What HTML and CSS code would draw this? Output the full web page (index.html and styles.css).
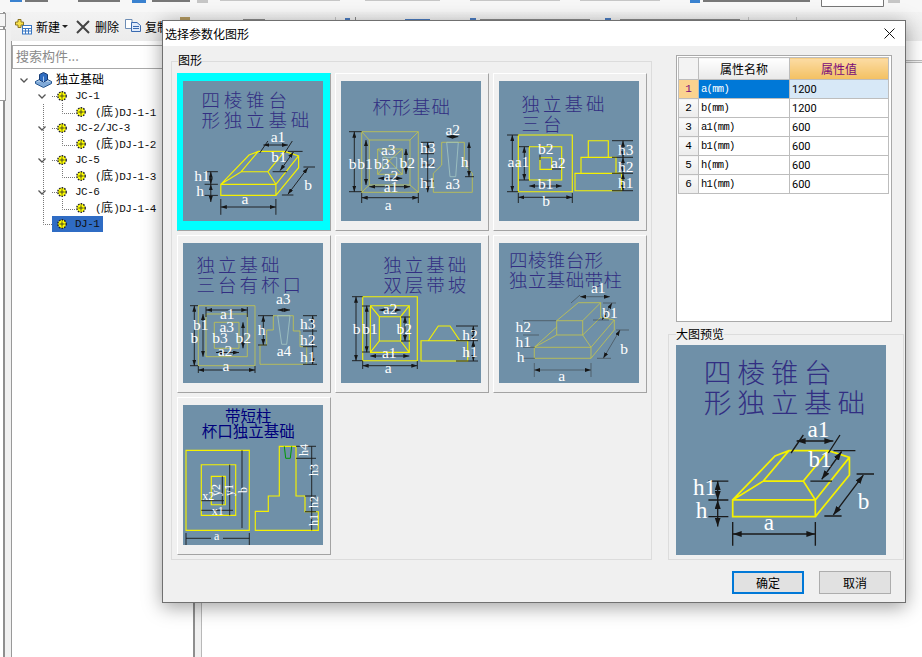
FILE: index.html
```html
<!DOCTYPE html>
<html lang="zh-CN">
<head>
<meta charset="utf-8">
<title>选择参数化图形</title>
<link rel="stylesheet" href="styles.css">
</head>
<body>
<svg class="sprite" width="0" height="0" aria-hidden="true">
  <defs>
    <marker id="ar" viewBox="0 0 6 4" markerWidth="6" markerHeight="4" refX="6" refY="2" orient="auto-start-reverse" markerUnits="userSpaceOnUse">
      <path d="M0 0L6 2L0 4Z" fill="#161616"/>
    </marker>
    <symbol id="gear" viewBox="0 0 10 10">
      <circle cx="5" cy="5" r="4.2" fill="#ffff00" stroke="#1c1c30" stroke-width="1.4" stroke-dasharray="1.6 1.1"/>
      <path d="M5 2.4V7.6M2.4 5H7.6" stroke="#3a3a20" stroke-width=".9"/>
    </symbol>

    <symbol id="fig1" viewBox="0 0 140 140">
      <rect class="bg" width="140" height="140"/>
      <text class="tt wide" x="18.500" y="25.500">四棱锥台</text>
      <text class="tt wide" x="18.500" y="45.500">形独立基础</text>
      <path class="y" d="M37.8 103.3H92.9V114.4H37.8ZM37.8 103.3L66 74L75.3 70.4H101.6L115.6 74.9V86.7L92.9 114.4M92.9 103.3L115.6 74.9M37.8 103.3L58.2 90.7H84.9L92.9 103.3M58.2 90.7L75.3 70.4M84.9 90.7L101.6 70.4"/>
      <path class="k" d="M37.8 118V133.8M92.9 118V133.8M76.7 72L84.9 60M101.6 72L109.3 60M105 70.4H119.6M89.6 90.7H104M120.4 86H132M98.9 114H110.4M21.6 90.7H34.9M21.6 103.3H34.9M21.6 114.4H34.9"/>
      <g class="k" marker-start="url(#ar)" marker-end="url(#ar)">
        <line x1="37.8" y1="126" x2="92.9" y2="126"/>
        <line x1="80.4" y1="64" x2="104.9" y2="64"/>
        <line x1="110.4" y1="71" x2="97.1" y2="89.6"/>
        <line x1="124.9" y1="86.7" x2="104.9" y2="113.3"/>
        <line x1="27.8" y1="90.7" x2="27.8" y2="103.3"/>
        <line x1="27.8" y1="103.3" x2="27.8" y2="121"/>
      </g>
      <text class="t" x="62" y="123">a</text><text class="t" x="95" y="61">a1</text>
      <text class="t" x="96" y="81">b1</text><text class="t" x="125" y="109">b</text>
      <text class="t" x="19" y="100">h1</text><text class="t" x="17" y="115">h</text>
    </symbol>

    <symbol id="fig2" viewBox="0 0 140 140">
      <rect class="bg" width="140" height="140"/>
      <text class="tt" x="31.5" y="33" letter-spacing="1.2">杯形基础</text>
      <path class="o" d="M20.7 50.7H77.3V111.3H20.7ZM28.3 59H69V104H28.3ZM36.7 68H61.3V93.3H36.7ZM20.7 50.7L28.3 59M77.3 50.7L69 59M20.7 111.3L28.3 104M77.3 111.3L69 104M36.7 93.3L48 80L61.3 68M36.7 68L61.3 93.3M100.7 61.3H123.3V84L131.3 92.3V111.3H92.3V92.3L100.7 84Z"/>
      <path class="l" d="M41.7 76.3H55.7V87.3H41.7ZM105.7 61.3H117.3L114.7 95.7H109Z"/>
      <path class="k" d="M8 50.7H20.7M8 110.7H20.7M20.7 112V122M77.3 112V122M80 61.3H93M80 72.7H93M80 84H93M80 100H93M124 95.7H133"/>
      <g class="k" marker-start="url(#ar)" marker-end="url(#ar)">
        <line x1="13.3" y1="50.7" x2="13.3" y2="110.7"/><line x1="25" y1="59" x2="25" y2="104"/>
        <line x1="65" y1="68" x2="65" y2="93"/><line x1="37.3" y1="97.3" x2="61.3" y2="97.3"/>
        <line x1="28.3" y1="105.7" x2="69" y2="105.7"/><line x1="20.7" y1="116.7" x2="77.3" y2="116.7"/>
        <line x1="105.7" y1="55.7" x2="117.3" y2="55.7"/><line x1="128" y1="61.3" x2="128" y2="95.7"/>
        <line x1="86.7" y1="61.3" x2="86.7" y2="111.3"/>
      </g>
      <text class="t" x="11.7" y="88">b</text><text class="t" x="24" y="88">b1</text><text class="t" x="40.7" y="88">b3</text>
      <text class="t" x="66.3" y="87">b2</text><text class="t" x="47.3" y="74">a3</text><text class="t" x="50" y="100">a2</text>
      <text class="t" x="50" y="111">a1</text><text class="t" x="47.3" y="129">a</text><text class="t" x="111.7" y="54">a2</text>
      <text class="t" x="111.7" y="108">a3</text><text class="t" x="86.7" y="72">h3</text><text class="t" x="86.7" y="87">h2</text>
      <text class="t" x="86.7" y="107">h1</text><text class="t" x="123.5" y="86">h</text>
    </symbol>

    <symbol id="fig3" viewBox="0 0 140 140">
      <rect class="bg" width="140" height="140"/>
      <text class="tt" x="22.5" y="30" letter-spacing="3">独立基础</text>
      <text class="tt" x="22.5" y="50" letter-spacing="3">三台</text>
      <path class="y" d="M19.3 54H73.3V110.7H19.3ZM30.3 65.7H62.7V99H30.3ZM41 76.7H52.7V88.3H41ZM89.3 59.7H109.3V76.3H89.3ZM82 76.3H117V92.3H82ZM76 92.3H122.7V109.7H76Z"/>
      <path class="k" d="M8 54H19.3M8 110.7H19.3M20 65.7H30M20 99H30M19.3 112V122M73.3 112V122M113 59.7H134M113 76.3H134M113 92.3H134M113 109.7H134M41 79V74M53 88H62"/>
      <g class="k" marker-start="url(#ar)" marker-end="url(#ar)">
        <line x1="13.3" y1="54" x2="13.3" y2="110.7"/><line x1="25.3" y1="65.7" x2="25.3" y2="99"/>
        <line x1="30.3" y1="105" x2="62.7" y2="105"/><line x1="19.3" y1="116.3" x2="73.3" y2="116.3"/>
        <line x1="124" y1="59.7" x2="124" y2="76.3"/><line x1="124" y1="76.3" x2="124" y2="92.3"/><line x1="124" y1="92.3" x2="124" y2="109.7"/>
      </g>
      <text class="t" x="12" y="86">a</text><text class="t" x="23" y="86">a1</text><text class="t" x="46.7" y="73">b2</text>
      <text class="t" x="59.3" y="87">a2</text><text class="t" x="46.7" y="108">b1</text><text class="t" x="47" y="125">b</text>
      <text class="t" x="126.7" y="74">h3</text><text class="t" x="126.7" y="90.7">h2</text><text class="t" x="126.7" y="107">h1</text>
    </symbol>

    <symbol id="fig4" viewBox="0 0 140 140">
      <rect class="bg" width="140" height="140"/>
      <text class="tt" x="13.5" y="28.7" letter-spacing="3">独立基础</text>
      <text class="tt" x="13.5" y="49" letter-spacing="3">三台有杯口</text>
      <path class="o" d="M15.3 62.7H72V122.7H15.3ZM23 71H64.3V113.7H23ZM31.3 79.3H56V105.3H31.3ZM90.3 72.7H110.3V88H117V103.7H123.7V121.3H77V102H83.7V87H90.3Z"/>
      <path class="l" d="M94.7 72.7H107L103.7 101.3H98.7Z"/>
      <path class="k" d="M7 62.7H15M7 122.7H15M75 72.7H90M75 102H84M120 72.7H134M120 88H134M120 103.7H134M120 121.3H134M15.3 123V130M72 123V130M23 64V74M64.3 64V74"/>
      <g class="k" marker-start="url(#ar)" marker-end="url(#ar)">
        <line x1="11.3" y1="62.7" x2="11.3" y2="122.7"/><line x1="15.3" y1="127" x2="72" y2="127"/>
        <line x1="23" y1="67" x2="64.3" y2="67"/><line x1="20" y1="71" x2="20" y2="113.7"/>
        <line x1="33" y1="109.5" x2="56" y2="109.5"/><line x1="60" y1="79.3" x2="60" y2="105.3"/>
        <line x1="94.7" y1="67" x2="107" y2="67"/><line x1="80.3" y1="72.7" x2="80.3" y2="102"/>
        <line x1="129.7" y1="72.7" x2="129.7" y2="121.3"/>
      </g>
      <text class="t" x="44.3" y="76">a1</text><text class="t" x="43.7" y="88.7">a3</text><text class="t" x="17.7" y="87">b1</text>
      <text class="t" x="11.3" y="99.7">b</text><text class="t" x="37" y="99.7">b3</text><text class="t" x="60.3" y="99.7">b2</text>
      <text class="t" x="42" y="112.7">a2</text><text class="t" x="43" y="128">a</text><text class="t" x="100.3" y="61">a3</text>
      <text class="t" x="101" y="113">a4</text><text class="t" x="78.7" y="92">h</text><text class="t" x="124.7" y="86">h3</text>
      <text class="t" x="124.7" y="102">h2</text><text class="t" x="124.7" y="118.7">h1</text>
    </symbol>

    <symbol id="fig5" viewBox="0 0 140 140">
      <rect class="bg" width="140" height="140"/>
      <text class="tt" x="42.3" y="28.7" letter-spacing="3">独立基础</text>
      <text class="tt" x="42.3" y="49" letter-spacing="3">双层带坡</text>
      <path class="y" d="M21.7 53.7H76.3V117.7H21.7ZM29.3 62.7H68.3V109.3H29.3ZM38.3 73.7H59.7V98H38.3ZM29.3 62.7L38.3 73.7M68.3 62.7L59.7 73.7M29.3 109.3L38.3 98M68.3 109.3L59.7 98M80 97.7H126.7V118H80ZM87.3 97.7L97.3 83H109L119 97.7"/>
      <path class="k" d="M11 53.7H21.7M11 117.7H21.7M21 63H29M21 109H29M60 74H69M60 98H69M21.7 118V126M76.3 118V126M115 83H137M115 97.7H137M115 118H137"/>
      <g class="k" marker-start="url(#ar)" marker-end="url(#ar)">
        <line x1="15" y1="53.7" x2="15" y2="117.7"/><line x1="25.7" y1="62.7" x2="25.7" y2="109.3"/>
        <line x1="64" y1="73.7" x2="64" y2="98"/><line x1="29.3" y1="113" x2="68.3" y2="113"/>
        <line x1="21.7" y1="122.7" x2="76.3" y2="122.7"/><line x1="38.3" y1="67" x2="59.7" y2="67"/>
        <line x1="132.3" y1="83" x2="132.3" y2="97.7"/><line x1="132.3" y1="97.7" x2="132.3" y2="118"/>
      </g>
      <text class="t" x="49" y="71">a2</text><text class="t" x="15.7" y="91">b</text><text class="t" x="29" y="91">b1</text>
      <text class="t" x="63.3" y="91">b2</text><text class="t" x="48.3" y="115">a1</text><text class="t" x="47.3" y="129.7">a</text>
      <text class="t" x="129" y="97">h2</text><text class="t" x="129" y="114.3">h1</text>
    </symbol>

    <symbol id="fig6" viewBox="0 0 140 140">
      <rect class="bg" width="140" height="140"/>
      <text class="tt" x="10" y="23.7" letter-spacing=".4">四棱锥台形</text>
      <text class="tt" x="10" y="44.3" letter-spacing=".4">独立基础带柱</text>
      <path class="o" d="M35.3 104.3H92V115.3H35.3ZM57.7 77.7H83.7V92H57.7ZM57.7 77.7L79.3 59.7H101.7L83.7 77.7M101.7 59.7V74.3L83.7 92M35.3 104.3L57.7 84M57.7 92L35.3 104.3M83.7 92L92 104.3L115.3 77V87L92 115.3M101.7 74.3L115.3 77"/>
      <path class="k thin" d="M35.3 120V134M92 120V134M72 60L81 52M104 60H117M94 77H110M117 87H130M98 115.3H112M24 77.7H57M24 92H40M24 104.3H36M24 115.3H36"/>
      <g class="k thin" marker-start="url(#ar)" marker-end="url(#ar)">
        <line x1="35.3" y1="127" x2="92" y2="127"/><line x1="81" y1="53.7" x2="111" y2="53.7"/>
        <line x1="113" y1="60" x2="103" y2="77"/><line x1="121" y1="87" x2="104.3" y2="115.3"/>
      </g>
      <text class="t" x="99.3" y="50.3">a1</text><text class="t" x="111" y="75.3">b1</text><text class="t" x="24.3" y="88.7">h2</text>
      <text class="t" x="24.3" y="104">h1</text><text class="t" x="21.7" y="118.7">h</text><text class="t" x="125" y="111">b</text>
      <text class="t" x="62.7" y="138">a</text>
    </symbol>

    <symbol id="fig7" viewBox="0 0 140 140">
      <rect class="bg" width="140" height="140"/>
      <text class="tn" x="42" y="17.3">带短柱</text>
      <text class="tn" x="18.7" y="32.3">杯口独立基础</text>
      <path class="y" d="M3 45.3H66.3V125.3H3ZM18.3 59.7H52.7V110.3H18.3ZM28.3 71.3H42.3V99.7H28.3ZM96.3 41.3H113V91H122V106.7H135.3V125.3H72.3V106.3H85.3V91H96.3Z"/>
      <path class="g" d="M101.3 41.3L102.7 53.3H107.3L108.7 41.3"/>
      <path class="k" d="M3 128V140M66.3 128V140M3 133.3H28M40 133.3H66.3M59 45.3V123M46.7 59.7V110.3M39.3 71.3V99.7M18.3 95.7H41M18.3 105.3H50M128.7 41.3V125.3M113 41.3H133M113 53.3H133M122 91H133M122 106.7H133"/>
      <text class="tb" x="25.3" y="95">x2</text><text class="tb" x="34.7" y="110">x1</text><text class="tb" x="33.7" y="135">a</text>
      <text class="tb" transform="rotate(-90 37 85)" x="37" y="85">y2</text>
      <text class="tb" transform="rotate(-90 50 85)" x="50" y="85">y1</text>
      <text class="tb" transform="rotate(-90 64 85)" x="64" y="85">b</text>
      <text class="tb" transform="rotate(-90 125 45)" x="125" y="45">h4</text>
      <text class="tb" transform="rotate(-90 135 65)" x="135" y="65">h3</text>
      <text class="tb" transform="rotate(-90 135 97)" x="135" y="97">h2</text>
      <text class="tb" transform="rotate(-90 135 115)" x="135" y="115">h1</text>
    </symbol>
  </defs>
</svg>

<div class="app">
  <svg class="topstrip" viewBox="0 0 922 12" aria-hidden="true">
    <path class="strip-a" d="M25 0H48V2H25ZM78 0H120V2H78ZM152 0H190V2H152ZM703 0H810V2H703Z"/>
    <path class="strip-b" d="M10 0H22V2H10ZM132 0H146V3H132ZM690 0H700V3H690Z"/>
    <path class="strip-c" d="M197 0H208V3H197ZM220 0H340V1H220ZM365 0H440V1H365ZM470 0H560V1H470ZM580 0H660V1H580ZM888 0H900V3H888Z"/>
    <path class="strip-box" d="M821.500 0V6.500H883.500V0"/>
  </svg>
  <div class="work">
    <div class="rail">
      <div class="rail-tab"></div>
      <div class="rail-tab tall"></div>
    </div>
    <div class="workspace">
      <div class="toolbar">
        <svg class="tool-icon" viewBox="0 0 17 16" aria-hidden="true">
          <rect x="7.500" y="6.500" width="9" height="8.500" fill="#fff" stroke="#3b78c4"/>
          <path d="M7.500 9.500H16.500M10.500 9.500V15M13.500 9.500V15M7.500 12H16.500" stroke="#3b78c4" fill="none"/>
          <path d="M3 .5H6V3H8.500V6H6V8.500H3V6H.5V3H3Z" fill="#f7e04a" stroke="#8a7420"/>
        </svg>
        <span class="tool-label">新建</span>
        <span class="caret"></span>
        <svg class="tool-icon del" viewBox="0 0 14 14" aria-hidden="true">
          <path d="M1 1L13 13M13 1L1 13" stroke="#444" stroke-width="2" fill="none"/>
        </svg>
        <span class="tool-label">删除</span>
        <svg class="tool-icon copy" viewBox="0 0 16 13" aria-hidden="true">
          <path d="M.5.5H7V9.500H.5Z" fill="#fff" stroke="#6d8db5"/>
          <path d="M6.500 3.500H12L15.500 6.500V12.500H6.500Z" fill="#dfeafa" stroke="#3a6ab0"/>
          <path d="M8 7.500H14M8 9.500H14" stroke="#3a6ab0"/>
        </svg>
        <span class="tool-label">复制</span>
        <svg class="tool-frags" viewBox="0 0 752 29" aria-hidden="true">
          <path class="frag-t" d="M10 5H20V8H10Z"/>
          <path class="frag-k" d="M73 7H95V8H73ZM185 5H186V8H185ZM310 7H420V8H310ZM450 7H570V8H450Z"/>
          <path class="frag-b" d="M175 6H180V8H175ZM235 7H260V8H235ZM300 6H306V8H300ZM435 6H441V8H435Z"/>
          <path class="frag-s" d="M165 5H166V8H165ZM578 5H579V8H578ZM626 5H627V8H626Z"/>
        </svg>
      </div>
      <div class="panes">
        <aside class="panel">
          <div class="search">搜索构件...</div>
          <div class="tree">
            <svg class="tree-lines" viewBox="0 0 181 170" aria-hidden="true">
              <path d="M31.500 35V155.500H40M50.500 34V44.500H63M50.500 66V76.500H63M50.500 98V108.500H63M50.500 130V140.500H63M40 27.500H45M40 59.500H45M40 91.500H45M40 123.500H45" />
            </svg>
            <div class="row root">
              <svg class="chev" viewBox="0 0 8 5" aria-hidden="true"><path d="M.5 .5L4 4L7.500 .5"/></svg>
              <svg class="root-icon" viewBox="0 0 17 16" aria-hidden="true">
                <path d="M.5 9.500L8.500 5.500L16.500 9.500L8.500 14Z" fill="#cfe3f7" stroke="#24558f"/>
                <path d="M.5 9.500V11.500L8.500 15.500L16.500 11.500V9.500" fill="#7fa9d8" stroke="#24558f"/>
                <path d="M4.500 2.500L8.500 .5L12.500 2.500V8L8.500 10L4.500 8Z" fill="#2f6cc0" stroke="#173c75"/>
                <path d="M8.500 4.500V10" stroke="#a9c9ef"/>
              </svg>
              <span class="cn-label">独立基础</span>
            </div>
            <div class="row lvl1"><svg class="chev" viewBox="0 0 8 5" aria-hidden="true"><path d="M.5 .5L4 4L7.500 .5"/></svg><svg class="gear" aria-hidden="true"><use href="#gear"/></svg><span class="code">JC-1</span></div>
            <div class="row lvl2"><svg class="gear" aria-hidden="true"><use href="#gear"/></svg><span class="code">(<span class="cn">底</span>)DJ-1-1</span></div>
            <div class="row lvl1"><svg class="chev" viewBox="0 0 8 5" aria-hidden="true"><path d="M.5 .5L4 4L7.500 .5"/></svg><svg class="gear" aria-hidden="true"><use href="#gear"/></svg><span class="code">JC-2/JC-3</span></div>
            <div class="row lvl2"><svg class="gear" aria-hidden="true"><use href="#gear"/></svg><span class="code">(<span class="cn">底</span>)DJ-1-2</span></div>
            <div class="row lvl1"><svg class="chev" viewBox="0 0 8 5" aria-hidden="true"><path d="M.5 .5L4 4L7.500 .5"/></svg><svg class="gear" aria-hidden="true"><use href="#gear"/></svg><span class="code">JC-5</span></div>
            <div class="row lvl2"><svg class="gear" aria-hidden="true"><use href="#gear"/></svg><span class="code">(<span class="cn">底</span>)DJ-1-3</span></div>
            <div class="row lvl1"><svg class="chev" viewBox="0 0 8 5" aria-hidden="true"><path d="M.5 .5L4 4L7.500 .5"/></svg><svg class="gear" aria-hidden="true"><use href="#gear"/></svg><span class="code">JC-6</span></div>
            <div class="row lvl2"><svg class="gear" aria-hidden="true"><use href="#gear"/></svg><span class="code">(<span class="cn">底</span>)DJ-1-4</span></div>
            <div class="row selected"><svg class="gear" aria-hidden="true"><use href="#gear"/></svg><span class="code">DJ-1</span></div>
          </div>
        </aside>
        <div class="splitter"></div>
        <main class="main"><div class="main-rule"></div></main>
      </div>
    </div>
  </div>
</div>

<section class="dialog">
  <header class="dialog-title">
    <span>选择参数化图形</span>
    <svg class="close" viewBox="0 0 11 11" aria-hidden="true"><path d="M.5 .5L10.500 10.500M10.500 .5L.5 10.500"/></svg>
  </header>
  <div class="content">
    <div class="group shapes">
      <div class="group-label">图形</div>
      <div class="shape-grid">
        <div class="cell active"><svg class="thumb"><use href="#fig1"/></svg></div>
        <div class="cell"><svg class="thumb"><use href="#fig2"/></svg></div>
        <div class="cell"><svg class="thumb"><use href="#fig3"/></svg></div>
        <div class="cell"><svg class="thumb"><use href="#fig4"/></svg></div>
        <div class="cell"><svg class="thumb"><use href="#fig5"/></svg></div>
        <div class="cell"><svg class="thumb"><use href="#fig6"/></svg></div>
        <div class="cell"><svg class="thumb"><use href="#fig7"/></svg></div>
      </div>
    </div>
    <div class="side">
      <div class="table-wrap">
        <table class="props">
          <thead>
            <tr><th class="corner"></th><th class="name-head">属性名称</th><th class="value-head">属性值</th></tr>
          </thead>
          <tbody>
            <tr><th class="idx current">1</th><td class="name picked">a(mm)</td><td class="val picked-val">1200</td></tr>
            <tr><th class="idx">2</th><td class="name">b(mm)</td><td class="val">1200</td></tr>
            <tr><th class="idx">3</th><td class="name">a1(mm)</td><td class="val">600</td></tr>
            <tr><th class="idx">4</th><td class="name">b1(mm)</td><td class="val">600</td></tr>
            <tr><th class="idx">5</th><td class="name">h(mm)</td><td class="val">600</td></tr>
            <tr><th class="idx">6</th><td class="name">h1(mm)</td><td class="val">600</td></tr>
          </tbody>
        </table>
      </div>
      <div class="group preview">
        <div class="group-label">大图预览</div>
        <svg class="large"><use href="#fig1"/></svg>
      </div>
    </div>
  </div>
  <footer class="dialog-foot">
    <button class="btn primary" type="button">确定</button>
    <button class="btn" type="button">取消</button>
  </footer>
</section>
</body>
</html>
```

FILE: styles.css
```css
* { box-sizing: border-box; }
html, body { margin: 0; padding: 0; }
body {
  width: 922px;
  height: 657px;
  overflow: hidden;
  position: relative;
  background: #fff;
  color: #000;
  font: 12px "Noto Sans CJK SC", "Liberation Sans", sans-serif;
}
.sprite { position: absolute; }

/* ---------- application behind the dialog ---------- */
.app { display: flex; flex-direction: column; height: 657px; }
.topstrip { display: block; width: 922px; height: 12px; flex: none; background: #f7f7f7; }
.strip-a { fill: #777; }
.strip-b { fill: #3a82d0; }
.strip-c { fill: #c6c6c6; }
.strip-box { fill: #fff; stroke: #777; }

.work { flex: 1; display: flex; min-height: 0; }
.rail {
  width: 11px;
  flex: none;
  background: linear-gradient(to right, #fff 3px, #8e8e8e 3px, #8e8e8e 5px, #f0f0f0 5px);
  display: flex;
  flex-direction: column;
  padding-top: 1px;
  gap: 2px;
}
.rail-tab { width: 6px; height: 14px; background: #f5f5f5; border: 1px solid #9a9a9a; border-left: 0; }
.rail-tab.tall { height: 72px; background: #fff; }

.workspace { flex: 1; display: flex; flex-direction: column; min-width: 0; }
.toolbar {
  height: 29px;
  flex: none;
  display: flex;
  align-items: center;
  padding-left: 4px;
  background: linear-gradient(#f3f3f3, #ececec);
  overflow: hidden;
  position: relative;
}
.tool-icon { width: 17px; height: 16px; flex: none; }
.tool-icon.del { width: 14px; height: 14px; margin-left: 8px; }
.tool-icon.copy { width: 16px; height: 13px; margin-left: 6px; margin-top: -2px; }
.tool-label { margin-left: 4px; font-size: 12px; line-height: 16px; white-space: nowrap; }
.tool-icon.del + .tool-label { margin-left: 5px; }
.caret {
  width: 0;
  height: 0;
  margin-left: 2px;
  border: 3px solid transparent;
  border-top: 3px solid #222;
  border-bottom: 0;
}
.tool-frags { position: absolute; left: 159px; top: 0; width: 752px; height: 29px; }
.frag-t { fill: #b39a62; }
.frag-k { fill: #8a8a8a; }
.frag-b { fill: #4a7cc0; }
.frag-s { fill: #c4c4c4; }

.panes { flex: 1; display: flex; min-height: 0; }
.panel { width: 182px; flex: none; display: flex; flex-direction: column; border-left: 1px solid #999; background: #fff; margin-left: 0; }
.search {
  height: 24px;
  margin-top: 4px;
  border: 1px solid #a8a8a8;
  padding-left: 3px;
  line-height: 20px;
  font-size: 13px;
  color: #8a8a8a;
  flex: none;
}
.tree { flex: 1; position: relative; padding-top: 3px; }
.tree-lines {
  position: absolute;
  left: 0;
  top: 0;
  width: 181px;
  height: 170px;
  fill: none;
  stroke: #777;
  stroke-dasharray: 1 1;
}
.row { display: flex; align-items: center; height: 16px; position: relative; }
.root { padding-left: 8px; }
.lvl1 { padding-left: 26px; }
.lvl2 { padding-left: 64px; }
.selected { margin-left: 40px; width: 51px; padding-left: 5px; background: #2f6cc4; }
.chev { width: 8px; height: 5px; flex: none; fill: none; stroke: #555; stroke-width: 1.3; }
.root-icon { width: 17px; height: 16px; margin-left: 7px; margin-right: 4px; flex: none; }
.gear { width: 10px; height: 10px; flex: none; }
.lvl1 .gear { margin-left: 11px; }
.lvl1 .code, .selected .code { margin-left: 8px; }
.lvl2 .code { margin-left: 9px; }
.code {
  font-family: "Liberation Mono", "Noto Sans CJK SC", monospace;
  font-size: 11px;
  letter-spacing: -.5px;
  white-space: nowrap;
  color: #111;
}
.cn { font-family: "Noto Sans CJK SC", sans-serif; font-size: 12px; letter-spacing: 0; line-height: 12px; }
.cn-label { font-size: 12px; line-height: 14px; margin-top: -2px; white-space: nowrap; }

.splitter {
  width: 9px;
  flex: none;
  background: #f0f0f0;
  border-left: 2px solid #8e8e8e;
  border-right: 1px solid #b8b8b8;
}
.main { flex: 1; background: #fff; padding-top: 19px; }
.main-rule { height: 3px; border-top: 1px solid #bbb; border-bottom: 1px solid #bbb; background: #f2f2f2; }

/* ---------- dialog ---------- */
.dialog {
  position: absolute;
  left: 162px;
  top: 20px;
  width: 744px;
  height: 583px;
  background: #f0f0f0;
  border: 1px solid #707070;
  box-shadow: 0 4px 18px rgba(0, 0, 0, .38);
  display: flex;
  flex-direction: column;
}
.dialog-title {
  height: 25px;
  flex: none;
  background: #fff;
  display: flex;
  align-items: center;
  justify-content: space-between;
  padding: 0 10px 0 2px;
  font-size: 12px;
}
.close { width: 11px; height: 11px; fill: none; stroke: #111; stroke-width: 1; }
.content { display: flex; padding: 9px 0 0 8px; gap: 16px; }
.group { border: 1px solid #dcdcdc; }
.group-label {
  width: max-content;
  height: 14px;
  line-height: 14px;
  background: #f0f0f0;
  font-size: 12px;
}
.shapes { width: 481px; margin-top: 6px; padding: 0 0 4px 5px; }
.shapes .group-label { margin: -9px 0 6px 1px; }
.shape-grid { display: grid; grid-template-columns: repeat(3, 154px); grid-auto-rows: 158px; gap: 4px; }
.cell {
  padding: 7px 0 0 5px;
  background: #f0f0f0;
  border: 1px solid;
  border-color: #fff #a3a3a3 #a3a3a3 #fff;
}
.cell.active { background: #00ffff; border-color: #00ffff #a3a3a3 #a3a3a3 #00ffff; }
.thumb { display: block; width: 140px; height: 140px; }
.large { display: block; width: 210px; height: 210px; }

.side { width: 236px; flex: none; display: flex; flex-direction: column; }
.table-wrap {
  margin-left: 8px;
  width: 216px;
  height: 267px;
  background: #fff;
  border: 1px solid #a9a9a9;
  padding: 1px 0 0 1px;
}
.props { border-collapse: collapse; table-layout: fixed; width: 210px; }
.props th, .props td { border: 1px solid #bdbdbd; padding: 0; font-weight: 400; height: 19px; line-height: 17px; overflow: hidden; }
.props thead th { height: 22px; text-align: center; font-size: 12px; }
.corner { width: 20px; background: #f3f3f3; }
.name-head { width: 91px; background: linear-gradient(#fff, #e9e9e9); }
.value-head { width: 99px; background: linear-gradient(#fcdca4, #f3c061); color: #7a0a7a; }
.idx { text-align: center; background: linear-gradient(#fafafa, #ececec); font: 11px "Liberation Mono", monospace; }
.idx.current { background: #fbd38f; color: #7a0a7a; }
.name { padding-left: 2px !important; font: 10.5px "Liberation Mono", monospace; letter-spacing: -.7px; }
.val { padding-left: 2px !important; font: 11px "Roboto", "Liberation Sans", sans-serif; }
.picked { background: #0078d7; color: #fff; }
.picked-val { background: #d7e8f7; }

.preview { margin-top: 12px; padding: 0 0 4px 7px; }
.preview .group-label { margin: -8px 0 4px 0; }

.dialog-foot { display: flex; justify-content: flex-end; gap: 15px; padding-right: 14px; margin-top: 11px; }
.btn {
  width: 72px;
  height: 23px;
  padding: 0;
  background: #e1e1e1;
  border: 1px solid #adadad;
  font: 12px "Noto Sans CJK SC", sans-serif;
  color: #000;
}
.btn.primary { border: 2px solid #0078d7; }

/* ---------- parametric drawings ---------- */
.bg { fill: #6f90a8; }
.tt { fill: #322e82; font: 300 18.5px "Noto Sans CJK SC", sans-serif; }
.tt.wide { letter-spacing: 3.8px; }
.tn { fill: #00007c; font: 400 15.5px "Noto Sans CJK SC", sans-serif; }
.t { fill: #fff; font: 15.5px "Liberation Serif", serif; text-anchor: middle; }
.tb { fill: #fff; font: 12px "Liberation Serif", serif; text-anchor: middle; }
.y { fill: none; stroke: #f5f100; stroke-width: 1.15; }
.o { fill: none; stroke: #c6c64a; stroke-width: .8; }
.l { fill: none; stroke: #a4c8c4; stroke-width: .8; }
.g { fill: none; stroke: #009a00; stroke-width: 1; }
.k { fill: none; stroke: #1a1a1a; stroke-width: .9; }
.k.thin { stroke: #333; stroke-width: .5; }
```
